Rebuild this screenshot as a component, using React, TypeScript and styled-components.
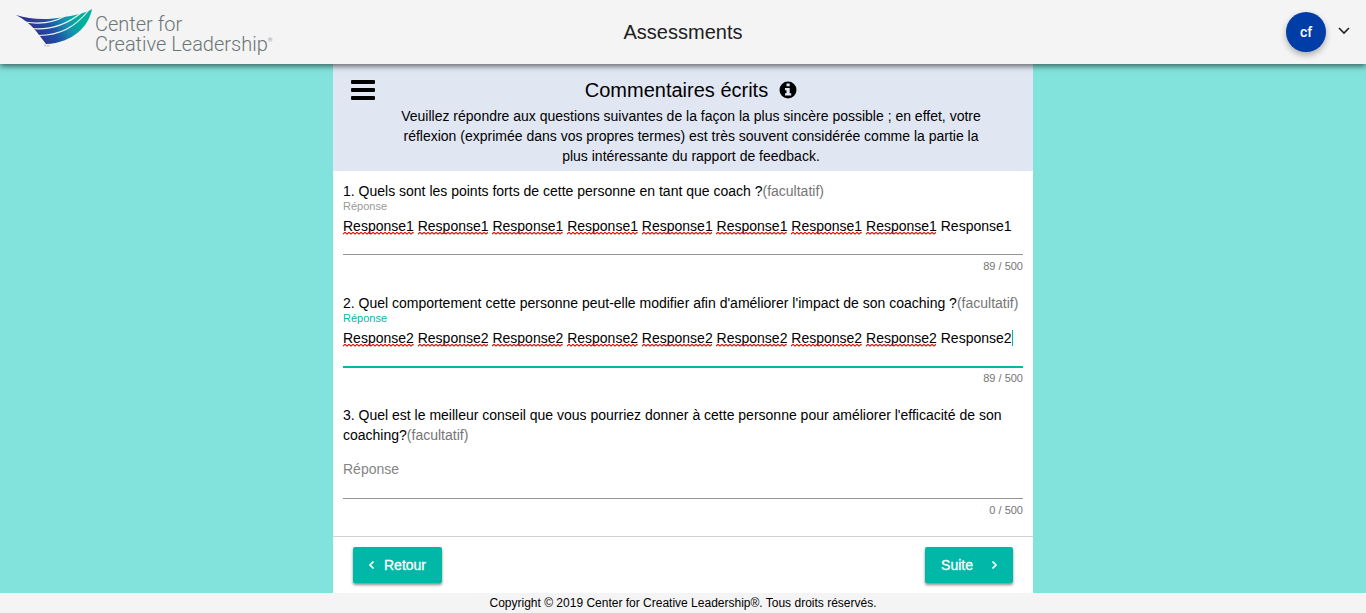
import React, { useState } from 'react';
import styled, { createGlobalStyle } from 'styled-components';

const teal = '#00b7a8';

const GlobalStyle = createGlobalStyle`
  * { box-sizing: border-box; }
  body {
    margin: 0;
    background: #82e2dc;
    color: #000;
    font: 14px/20px "Liberation Sans", Arial, sans-serif;
  }
`;

const Page = styled.div`
  min-height: 100vh;
  display: flex;
  flex-direction: column;
`;

const Header = styled.header`
  position: relative;
  z-index: 1;
  height: 64px;
  flex: none;
  display: grid;
  grid-template-columns: 1fr auto 1fr;
  align-items: center;
  padding: 0 16px;
  background: #f4f4f4;
  box-shadow: 0 2px 6px rgba(0, 0, 0, 0.6);
`;

const Brand = styled.a`
  display: flex;
  align-items: center;
  gap: 3px;
  color: #6c7475;
  text-decoration: none;
`;

const BrandName = styled.span`
  display: flex;
  flex-direction: column;
  padding-top: 3px;
  font: 300 20px/20px Roboto, sans-serif;
  white-space: nowrap;
`;

const BrandLine = styled.span`
  display: flex;
`;

const Registered = styled.span`
  font-size: 6px;
  line-height: 12px;
`;

const AppTitle = styled.h1`
  margin: 0;
  font-size: 20px;
  line-height: 24px;
  font-weight: 400;
  color: #212121;
`;

const Account = styled.button`
  justify-self: end;
  display: flex;
  align-items: center;
  gap: 12px;
  padding: 0;
  border: 0;
  background: none;
`;

const Avatar = styled.span`
  width: 40px;
  height: 40px;
  border-radius: 50%;
  background: #003da6;
  color: #fff;
  font: 500 14px/40px Roboto, sans-serif;
  box-shadow: 0 3px 6px rgba(0, 0, 0, 0.3);
`;

const Sheet = styled.main`
  flex: 1;
  width: 100%;
  max-width: 700px;
  margin: 0 auto;
  display: flex;
  flex-direction: column;
  background: #fff;
`;

const Intro = styled.section`
  display: grid;
  grid-template-columns: 44px 1fr;
  padding: 14px 46px 5px 18px;
  background: #e0e7f3;
  text-align: center;
`;

const MenuButton = styled.button`
  align-self: start;
  width: 24px;
  padding: 2px 0 0;
  border: 0;
  background: none;
`;

const IntroTitle = styled.h2`
  display: flex;
  justify-content: center;
  align-items: center;
  gap: 11px;
  margin: 0 0 4px;
  font-size: 20px;
  line-height: 24px;
  font-weight: 400;
`;

const InfoButton = styled.button`
  display: flex;
  padding: 0;
  border: 0;
  background: none;
`;

const IntroText = styled.p`
  max-width: 590px;
  margin: 0 auto;
`;

const Form = styled.form`
  flex: 1;
  display: flex;
  flex-direction: column;
`;

const Questions = styled.div`
  flex: 1;
  display: flex;
  flex-direction: column;
  gap: 20px;
  padding: 10px 10px 18px;
`;

const Prompt = styled.p`
  margin: 0;
`;

const Optional = styled.span`
  color: #757575;
`;

const Field = styled.div<{ $active: boolean }>`
  position: relative;
  height: 54px;
  border-bottom: 1px solid ${p => (p.$active ? teal : '#949494')};
  box-shadow: ${p => (p.$active ? `0 1px 0 ${teal}` : 'none')};
`;

const FieldLabel = styled.label<{ $active: boolean; $empty: boolean }>`
  display: block;
  padding-top: ${p => (p.$empty ? '14px' : '0')};
  font-size: ${p => (p.$empty ? '14px' : '11px')};
  line-height: ${p => (p.$empty ? '20px' : '11px')};
  color: ${p => (p.$active ? teal : p.$empty ? '#858585' : '#999')};
`;

const Answer = styled.textarea`
  position: absolute;
  left: 0;
  top: 15px;
  width: 100%;
  height: 36px;
  padding: 0;
  border: 0;
  outline: 0;
  resize: none;
  overflow: hidden;
  background: none;
  color: #000;
  font: inherit;
`;

const SpellMarks = styled.div`
  position: absolute;
  left: 0;
  top: 31px;
  width: 668px;
  display: grid;
  grid-template-columns: repeat(9, 1fr);
  gap: 4px;
  pointer-events: none;
`;

const Squiggle = styled.svg`
  display: block;
  width: 100%;
  height: 3px;
`;

const Caret = styled.span`
  position: absolute;
  left: 669px;
  top: 17px;
  width: 1px;
  height: 16px;
  background: ${teal};
`;

const Counter = styled.div`
  padding-top: 4px;
  font-size: 11px;
  line-height: 14px;
  text-align: right;
  color: #757575;
`;

const Actions = styled.div`
  display: flex;
  justify-content: space-between;
  padding: 10px 20px;
  border-top: 1px solid #d0d0d0;
`;

const NavButton = styled.button<{ $gap: number }>`
  display: flex;
  align-items: center;
  gap: ${p => p.$gap}px;
  height: 36px;
  padding: 0 16px;
  border: 0;
  border-radius: 2px;
  background: ${teal};
  color: #fff;
  font: inherit;
  -webkit-text-stroke: 0.3px #fff;
  box-shadow: 0 2px 3px rgba(0, 0, 0, 0.45);
`;

const Footer = styled.footer`
  height: 20px;
  background: #f4f4f4;
  font-size: 12px;
  text-align: center;
`;

function LogoMark() {
  return (
    <svg width="76" height="46" viewBox="0 0 76 46" aria-hidden="true">
      <defs>
        <linearGradient id="wing" x1="0" y1="0.3" x2="1" y2="0">
          <stop offset="0.1" stopColor="#2e3192" />
          <stop offset="0.35" stopColor="#1f4fa3" />
          <stop offset="0.58" stopColor="#1494ae" />
          <stop offset="0.75" stopColor="#00b09c" />
        </linearGradient>
      </defs>
      <path
        d="M0 6 C10 9 20 10.5 32 10 C39 9.500 45 8.500 51 7.500 C61 6 69 4 76 0 C73 17 57 34 30 35 C26 30 24 27 20 22 C14 15 8 10 0 6Z"
        fill="url(#wing)"
      />
      <g fill="none" stroke="#f4f4f4" strokeWidth="1.1">
        <path d="M9 13 C24 15.500 37 14 49 7" />
        <path d="M15 19.500 C34 21.500 50 16 65 4" />
        <path d="M21 26.500 C44 27 59 18 73 1" />
      </g>
      <path d="M28 36h2M29 36v2M31 38v-2l1 1l1 -1v2" fill="none" stroke="#aaa" strokeWidth="0.5" />
    </svg>
  );
}

function Chevron({ d, w, h, color }: { d: string; w: number; h: number; color: string }) {
  return (
    <svg width={w} height={h} viewBox={`0 0 ${w} ${h}`} fill="none" stroke={color} strokeWidth="1.6" aria-hidden="true">
      <path d={d} />
    </svg>
  );
}

type QuestionProps = {
  id: string;
  prompt: string;
  initial?: string;
  active?: boolean;
  marks?: number;
};

function Question({ id, prompt, initial = '', active = false, marks = 0 }: QuestionProps) {
  const [value, setValue] = useState(initial);
  const empty = value === '';
  const showMarks = value === initial;
  return (
    <section>
      <Prompt id={`${id}-prompt`}>
        {prompt}
        <Optional>(facultatif)</Optional>
      </Prompt>
      <Field $active={active}>
        <FieldLabel htmlFor={id} $active={active} $empty={empty}>Réponse</FieldLabel>
        <Answer
          id={id}
          aria-describedby={`${id}-prompt`}
          maxLength={500}
          spellCheck={false}
          value={value}
          onChange={e => setValue(e.target.value)}
        />
        {showMarks && marks > 0 && (
          <SpellMarks aria-hidden="true">
            {Array.from({ length: marks }, (_, i) => (
              <Squiggle key={i}>
                <defs>
                  <pattern id={`${id}-wave-${i}`} width="4" height="3" patternUnits="userSpaceOnUse">
                    <path d="M-2 0.3 L0 2 L2 0.3 L4 2 L6 0.3" fill="none" stroke="#ff0000" strokeWidth="1.1" />
                  </pattern>
                </defs>
                <rect width="100%" height="3" fill={`url(#${id}-wave-${i})`} />
              </Squiggle>
            ))}
          </SpellMarks>
        )}
        {showMarks && active && <Caret />}
      </Field>
      <Counter>{value.length} / 500</Counter>
    </section>
  );
}

const repeated = (word: string) => Array(9).fill(word).join(' ');

export default function App() {
  return (
    <Page>
      <GlobalStyle />
      <Header>
        <Brand href="#">
          <LogoMark />
          <BrandName>
            <BrandLine>Center for</BrandLine>
            <BrandLine>
              Creative Leadership<Registered>®</Registered>
            </BrandLine>
          </BrandName>
        </Brand>
        <AppTitle>Assessments</AppTitle>
        <Account type="button" aria-label="Compte">
          <Avatar>cf</Avatar>
          <Chevron w={12} h={12} d="M1 2 L6 7 L11 2" color="#212121" />
        </Account>
      </Header>
      <Sheet>
        <Intro>
          <MenuButton type="button" aria-label="Menu">
            <svg width="24" height="20" viewBox="0 0 24 20" aria-hidden="true">
              <rect width="24" height="4" rx="1" />
              <rect y="8" width="24" height="4" rx="1" />
              <rect y="16" width="24" height="4" rx="1" />
            </svg>
          </MenuButton>
          <div>
            <IntroTitle>
              Commentaires écrits
              <InfoButton type="button" aria-label="Information">
                <svg width="18" height="18" viewBox="0 0 18 18" aria-hidden="true">
                  <circle cx="9" cy="9" r="8.5" />
                  <path d="M7.5 2.500h3.200v2.800h-3.200z M6 7h4.700v5.200h1.500v2.300H6v-2.300h1.500V9.200H6z" fill="#e0e7f3" />
                </svg>
              </InfoButton>
            </IntroTitle>
            <IntroText>
              Veuillez répondre aux questions suivantes de la façon la plus sincère possible ; en effet, votre réflexion
              (exprimée dans vos propres termes) est très souvent considérée comme la partie la plus intéressante du
              rapport de feedback.
            </IntroText>
          </div>
        </Intro>
        <Form>
          <Questions>
            <Question
              id="q1"
              prompt="1. Quels sont les points forts de cette personne en tant que coach ?"
              initial={repeated('Response1')}
              marks={8}
            />
            <Question
              id="q2"
              prompt="2. Quel comportement cette personne peut-elle modifier afin d'améliorer l'impact de son coaching ?"
              initial={repeated('Response2')}
              marks={8}
              active
            />
            <Question
              id="q3"
              prompt="3. Quel est le meilleur conseil que vous pourriez donner à cette personne pour améliorer l'efficacité de son coaching?"
            />
          </Questions>
          <Actions>
            <NavButton type="button" $gap={10}>
              <Chevron w={5} h={8} d="M4.5 0.5 L1 4 L4.5 7.5" color="#fff" />
              Retour
            </NavButton>
            <NavButton type="button" $gap={19}>
              Suite
              <Chevron w={5} h={8} d="M0.5 0.5 L4 4 L0.5 7.5" color="#fff" />
            </NavButton>
          </Actions>
        </Form>
      </Sheet>
      <Footer>Copyright © 2019 Center for Creative Leadership®. Tous droits réservés.</Footer>
    </Page>
  );
}
